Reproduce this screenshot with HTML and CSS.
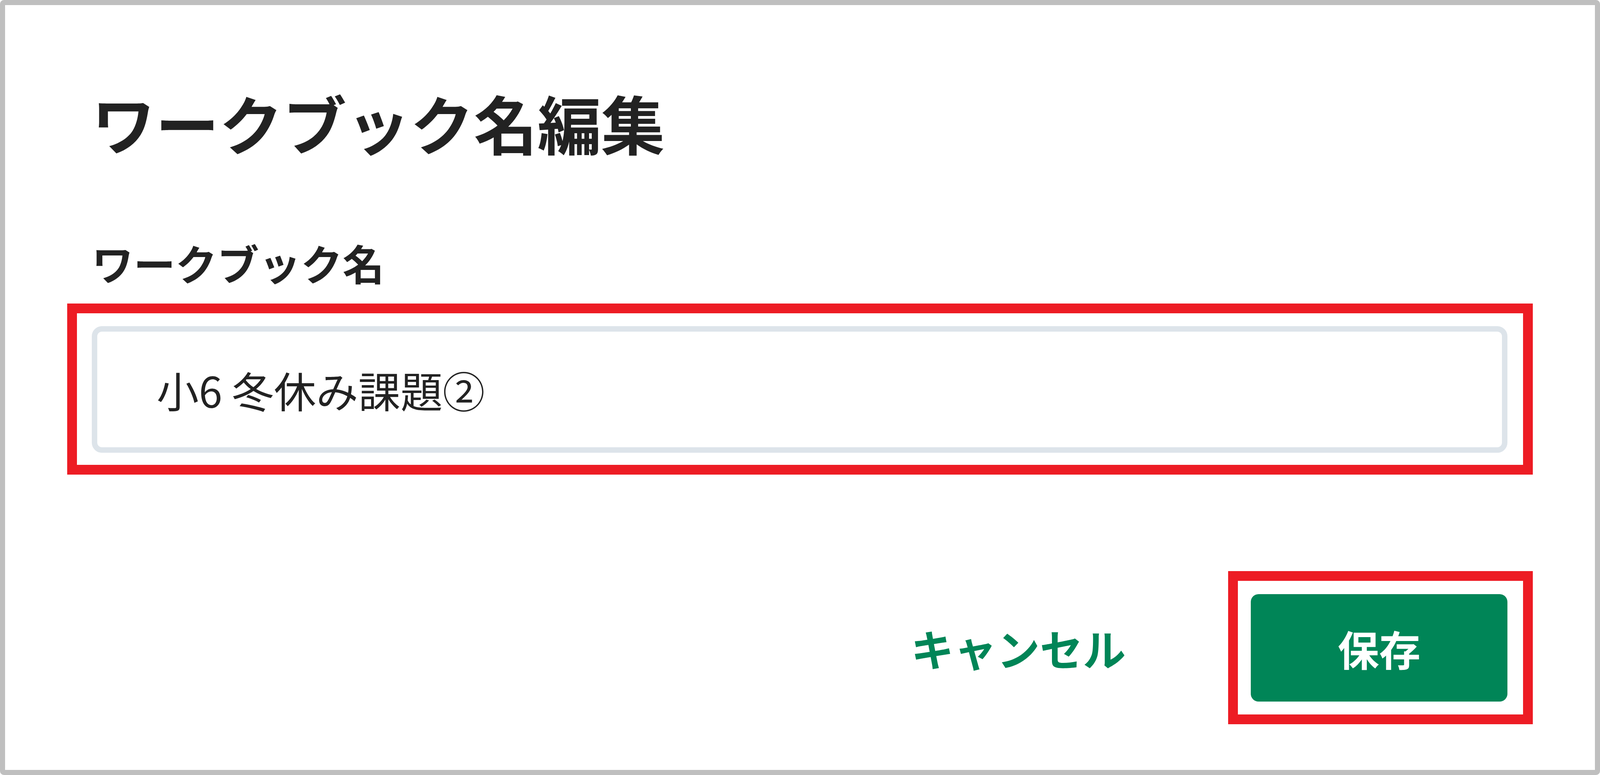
FILE: index.html
```html
<!DOCTYPE html>
<html lang="ja">
<head>
<meta charset="utf-8">
<title>ワークブック名編集</title>
<link rel="stylesheet" href="styles.css">
</head>
<body>
<div class="frame">
  <div class="dialog">
    <h1 class="title">ワークブック名編集</h1>
    <label class="label" for="wb-name">ワークブック名</label>
    <div class="mark mark-input">
      <div class="input" id="wb-name">小6 冬休み課題②</div>
    </div>
    <div class="footer">
      <span class="btn-cancel">キャンセル</span>
      <div class="mark mark-save">
        <span class="btn-save">保存</span>
      </div>
    </div>
  </div>
</div>
</body>
</html>
```

FILE: styles.css
```css
html, body {
  margin: 0;
  padding: 0;
  background: #ffffff;
}

body {
  font-family: "Noto Sans CJK JP", "Noto Sans", sans-serif;
  color: #222222;
}

.frame {
  box-sizing: border-box;
  height: 1984px;
  border: 13px solid #bfbfbf;
  border-radius: 10px;
  background: #ffffff;
  overflow: hidden;
}

.dialog {
  display: flex;
  flex-direction: column;
  padding: 191px 224px 0 222px;
}

.title {
  margin: 0;
  font-size: 163px;
  line-height: 216px;
  font-weight: 700;
  color: #222222;
}

.label {
  display: block;
  margin-top: 186px;
  font-size: 107px;
  line-height: 132px;
  font-weight: 700;
  color: #222222;
}

.mark {
  border: 25px solid #ed1c24;
}

.mark-input {
  margin: 39px -65px 0 -63px;
  padding: 33px 40px 31px 38px;
}

.input {
  box-sizing: border-box;
  height: 324px;
  border: 14px solid #dde4ea;
  border-radius: 26px;
  display: flex;
  align-items: center;
  padding-left: 152px;
  font-size: 108px;
  font-weight: 400;
  color: #222222;
}

.footer {
  display: flex;
  justify-content: flex-end;
  align-items: center;
  margin-top: 247px;
  margin-right: -65px;
}

.btn-cancel {
  font-size: 110px;
  line-height: 132px;
  font-weight: 700;
  color: #008557;
  margin-right: 262px;
}

.mark-save {
  padding: 34px 40px 33px 33px;
}

.btn-save {
  box-sizing: border-box;
  width: 657px;
  height: 275px;
  border-radius: 20px;
  background: #008557;
  color: #ffffff;
  display: flex;
  align-items: center;
  justify-content: center;
  font-size: 106px;
  font-weight: 700;
}
```
